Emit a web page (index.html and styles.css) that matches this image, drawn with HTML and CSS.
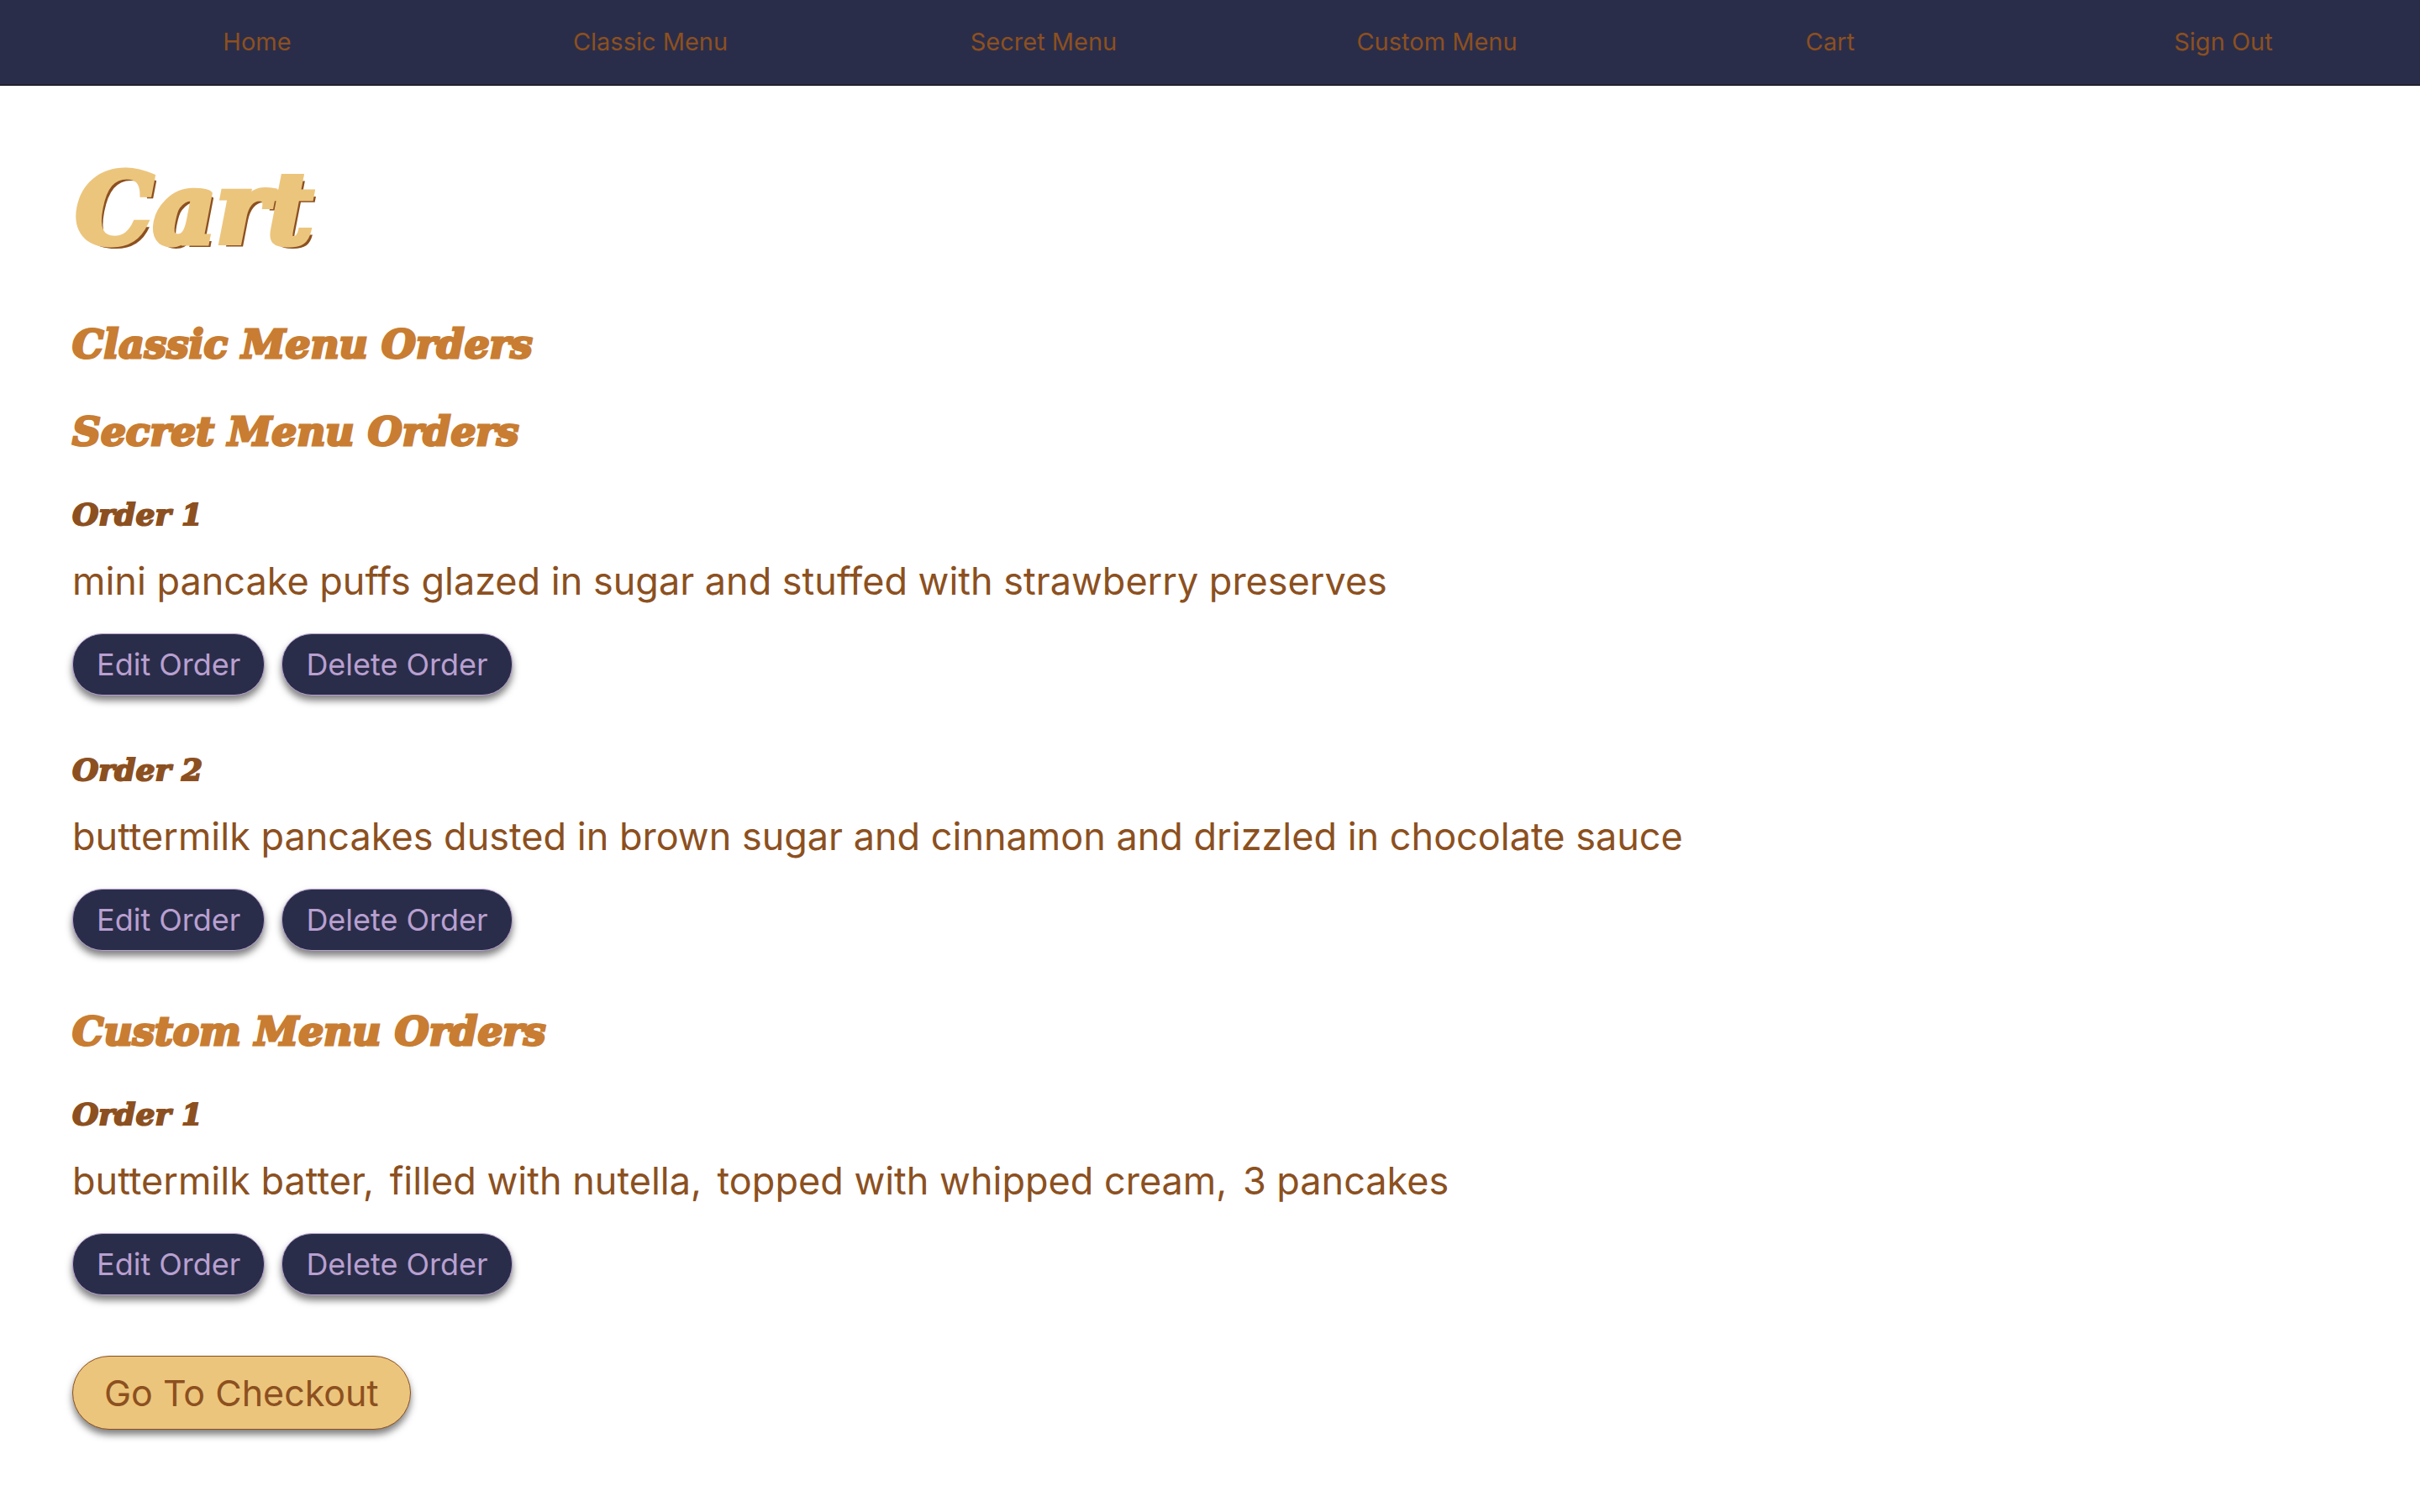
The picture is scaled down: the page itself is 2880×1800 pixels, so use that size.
FILE: index.html
```html
<!DOCTYPE html>
<html lang="en">
<head>
<meta charset="utf-8">
<meta name="viewport" content="width=device-width, initial-scale=1">
<title>Cart</title>
<link rel="stylesheet" href="styles.css">
</head>
<body>
<nav class="navbar">
  <a href="#home">Home</a>
  <a href="#classic">Classic Menu</a>
  <a href="#secret">Secret Menu</a>
  <a href="#custom">Custom Menu</a>
  <a href="#cart">Cart</a>
  <a href="#signout">Sign Out</a>
</nav>
<main class="cart">
  <h1>Cart</h1>
  <section class="menu">
    <h2>Classic Menu Orders</h2>
  </section>
  <section class="menu">
    <h2>Secret Menu Orders</h2>
    <div class="orders">
      <article class="order">
        <h3>Order 1</h3>
        <p>mini pancake puffs glazed in sugar and stuffed with strawberry preserves</p>
        <div class="actions"><button class="btn" type="button">Edit Order</button><button class="btn" type="button">Delete Order</button></div>
      </article>
      <article class="order">
        <h3>Order 2</h3>
        <p>buttermilk pancakes dusted in brown sugar and cinnamon and drizzled in chocolate sauce</p>
        <div class="actions"><button class="btn" type="button">Edit Order</button><button class="btn" type="button">Delete Order</button></div>
      </article>
    </div>
  </section>
  <section class="menu">
    <h2>Custom Menu Orders</h2>
    <div class="orders">
      <article class="order">
        <h3>Order 1</h3>
        <p><span class="part">buttermilk batter,</span> <span class="part">filled with nutella,</span> <span class="part">topped with whipped cream,</span> <span>3 pancakes</span></p>
        <div class="actions"><button class="btn" type="button">Edit Order</button><button class="btn" type="button">Delete Order</button></div>
      </article>
    </div>
  </section>
  <button class="btn checkout" type="button">Go To Checkout</button>
</main>
</body>
</html>
```
FILE: styles.css
```css
* {
  box-sizing: border-box;
}

body {
  margin: 0;
  background: #fff;
  color: #8c5020;
  font-family: Inter, "Liberation Sans", sans-serif;
  font-size: 45px;
  line-height: 60px;
}

h1,
h2,
h3,
p {
  margin: 0;
}

.navbar {
  display: grid;
  grid-template-columns: repeat(6, 1fr);
  padding: 32px 0 33px 72px;
  background: #2a2d4a;
  border-bottom: 1px solid #000;
}

.navbar a {
  color: #8c5020;
  font-size: 29px;
  line-height: 36px;
  text-align: center;
  text-decoration: none;
}

.cart {
  padding: 76px 86px;
}

h1,
h2,
h3 {
  font-family: "DejaVu Serif", "Liberation Serif", serif;
  font-style: italic;
  font-weight: bold;
}

h1 {
  margin-bottom: 60px;
  padding-left: 4px;
  color: #ecc57c;
  font-size: 116px;
  line-height: 140px;
  -webkit-text-stroke: 7px #ecc57c;
  text-shadow: 2px 2px 0 #8c5020, 5px 5px 0 #8c5020;
}

h2 {
  margin-bottom: 40px;
  color: #c87d32;
  font-size: 47px;
  line-height: 64px;
  -webkit-text-stroke: 3px #c87d32;
}

h3 {
  margin-bottom: 24px;
  font-size: 36px;
  line-height: 52px;
  -webkit-text-stroke: 2px #8c5020;
}

.orders {
  display: grid;
  gap: 62px;
  margin-bottom: 64px;
}

.part {
  margin-right: 6px;
}

.actions {
  display: flex;
  gap: 20px;
  margin-top: 32px;
}

.btn {
  height: 74px;
  padding: 0 28px;
  border: 1px solid #b9a0d0;
  border-radius: 36px;
  background: #2a2d4a;
  box-shadow: 0 6px 8px rgba(0, 0, 0, 0.5);
  color: #b9a0d0;
  font: 36px Inter, "Liberation Sans", sans-serif;
}

.checkout {
  display: block;
  height: 88px;
  margin-top: 72px;
  padding: 0 37px;
  border-color: #8c5020;
  border-radius: 44px;
  background: #ecc57c;
  color: #8c5020;
  font-size: 43px;
}
```
